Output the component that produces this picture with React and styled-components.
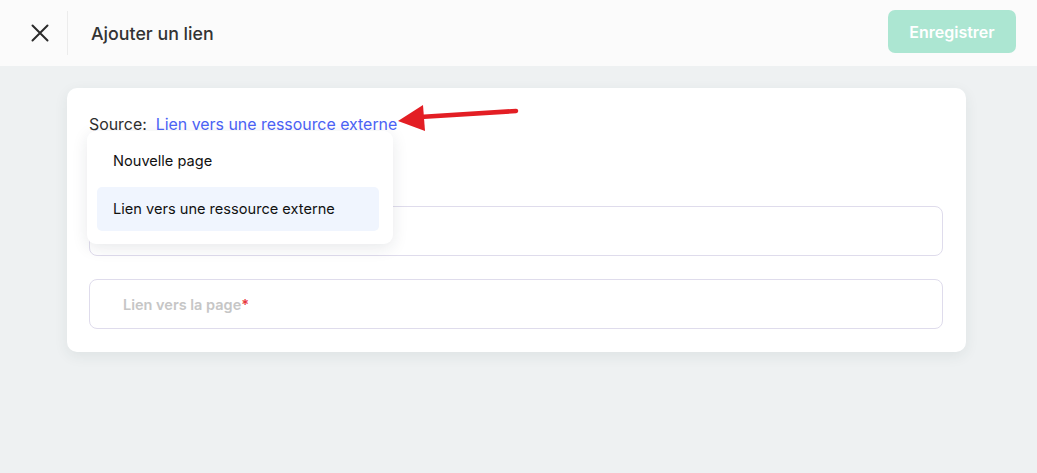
import React from 'react';
import styled, { createGlobalStyle } from 'styled-components';

const GlobalStyle = createGlobalStyle`
  html, body {
    margin: 0;
    padding: 0;
    background: #eef1f2;
    font-family: Inter, "Noto Sans", sans-serif;
  }
`;

const Page = styled.div`
  width: 1037px;
  height: 473px;
  background: #eef1f2;
  position: relative;
  overflow: hidden;
`;

const Header = styled.header`
  height: 66px;
  display: flex;
  align-items: center;
  background: #fbfbfb;
  padding: 0 21px 0 0;
  box-sizing: border-box;
`;

const CloseButton = styled.button`
  width: 68px;
  height: 44px;
  display: flex;
  align-items: center;
  justify-content: center;
  border: none;
  border-right: 1px solid #ececec;
  background: transparent;
  padding: 0 0 0 12px;
  box-sizing: border-box;
  color: #2b2b2b;
`;

const Title = styled.h1`
  flex: 1;
  margin: 0 0 0 23px;
  font-size: 17.8px;
  font-weight: 500;
  color: #333;
`;

const SaveButton = styled.button`
  align-self: flex-start;
  width: 128px;
  height: 43px;
  margin-top: 10px;
  border: none;
  border-radius: 7px;
  background: #ace6d2;
  color: #ffffff;
  font-family: Inter, sans-serif;
  font-size: 16px;
  font-weight: 600;
`;

const Card = styled.section`
  position: relative;
  width: 899px;
  margin: 22px 0 0 67px;
  box-sizing: border-box;
  padding: 24px 23px 23px 22px;
  background: #fff;
  border-radius: 10px;
  box-shadow: 0 4px 14px rgba(40, 60, 70, 0.08);
`;

const SourceRow = styled.div`
  display: flex;
  gap: 9px;
  font-size: 15.9px;
  line-height: 26px;
  height: 26px;
  color: #2e2e2e;
`;

const SourceLink = styled.span`
  color: #4c63f6;
`;

const Field = styled.div`
  height: 50px;
  box-sizing: border-box;
  border: 1px solid #dfdcec;
  border-radius: 8px;
  display: flex;
  align-items: center;
  padding-left: 33px;
  margin-top: ${p => p.$top}px;
`;

const Placeholder = styled.span`
  font-size: 14.5px;
  font-weight: 600;
  color: #c6c6c6;
`;

const Required = styled.span`
  color: #e8383d;
`;

const Menu = styled.ul`
  position: absolute;
  left: 20px;
  top: 43px;
  width: 306px;
  margin: 0;
  padding: 8px 14px 13px 10px;
  box-sizing: border-box;
  list-style: none;
  background: #fff;
  border-radius: 9px;
  box-shadow: 0 4px 16px rgba(30, 40, 60, 0.1);
  display: flex;
  flex-direction: column;
  gap: 4px;
  z-index: 2;
`;

const MenuItem = styled.li`
  height: 44px;
  display: flex;
  align-items: center;
  padding-left: 16px;
  border-radius: 5px;
  font-size: 14.6px;
  color: #111;
  background: ${p => (p.$active ? '#f0f5fe' : 'transparent')};
`;

const Arrow = styled.svg`
  position: absolute;
  left: 396px;
  top: 102px;
  z-index: 3;
`;

export default function App() {
  return (
    <Page>
      <GlobalStyle />
      <Header>
        <CloseButton aria-label="Fermer">
          <svg width="18" height="18" viewBox="0 0 18 18">
            <path d="M1.5 1.5 L16.5 16.5 M16.5 1.5 L1.5 16.5" stroke="#2b2b2b" strokeWidth="2" strokeLinecap="round" />
          </svg>
        </CloseButton>
        <Title>Ajouter un lien</Title>
        <SaveButton>Enregistrer</SaveButton>
      </Header>
      <Card>
        <SourceRow>
          <span>Source:</span>
          <SourceLink>Lien vers une ressource externe</SourceLink>
        </SourceRow>
        <Field $top={68} />
        <Field $top={23}>
          <Placeholder>
            Lien vers la page<Required>*</Required>
          </Placeholder>
        </Field>
        <Menu>
          <MenuItem>Nouvelle page</MenuItem>
          <MenuItem $active>Lien vers une ressource externe</MenuItem>
        </Menu>
      </Card>
      <Arrow width="124" height="32" viewBox="0 0 124 32">
        <path d="M120 9 L24 15" stroke="#e31e24" strokeWidth="4.5" strokeLinecap="round" />
        <path d="M2 19 L27 3 L29 29 Z" fill="#e31e24" />
      </Arrow>
    </Page>
  );
}
